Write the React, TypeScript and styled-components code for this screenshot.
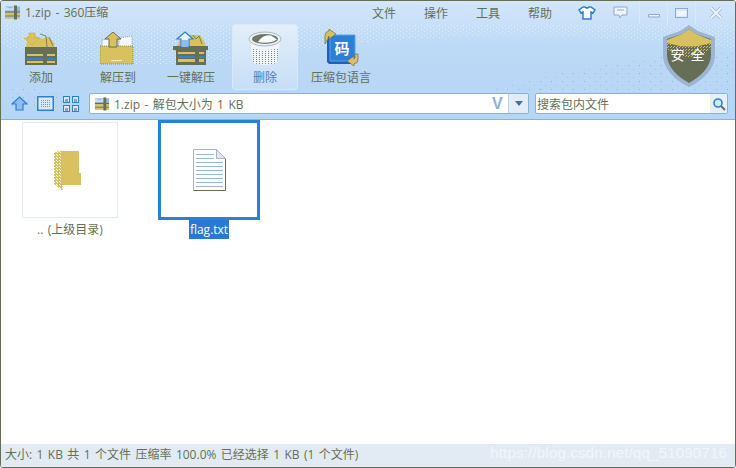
import styled, { createGlobalStyle } from "styled-components";

const OLIVE = "#666f55";
const GOLD = "#d9c15f";
const BLUE = "#2a7fd8";

const GlobalStyle = createGlobalStyle`
    html, body {
        margin: 0;
        padding: 0;
        background: #fff;
    }
    body {
        font-family: "Open Sans", "Noto Sans CJK SC", sans-serif;
        font-size: 12px;
        word-spacing: 1.3px;
        color: ${OLIVE};
    }
`;

const tools = [
    { label: "添加", width: 76, icon: <AddIcon /> },
    { label: "解压到", width: 78, icon: <ExtractToIcon /> },
    { label: "一键解压", width: 68, icon: <OneClickIcon /> },
    { label: "删除", width: 66, icon: <DeleteIcon />, hovered: true },
    { label: "压缩包语言", width: 86, icon: <LanguageIcon /> },
];

export default function App() {
    return (
        <Window>
            <GlobalStyle />
            <Header>
                <HeaderDots />
                <TitleBar>
                    <TitleText>
                        <ZipIcon size={17} />
                        1.zip - 360压缩
                    </TitleText>
                    <Menu>
                        <MenuItem>文件</MenuItem>
                        <MenuItem>操作</MenuItem>
                        <MenuItem>工具</MenuItem>
                        <MenuItem>帮助</MenuItem>
                    </Menu>
                    <WindowControls>
                        <SkinIcons>
                            <ShirtIcon />
                            <ChatIcon />
                        </SkinIcons>
                        <Control $width={28}><MinIcon /></Control>
                        <Control $width={28}><MaxIcon /></Control>
                        <Control $width={40}><CloseIcon /></Control>
                    </WindowControls>
                </TitleBar>
                <Toolbar>
                    {tools.map((tool) => (
                        <ToolButton key={tool.label} $width={tool.width} $hovered={tool.hovered}>
                            {tool.icon}
                            <ToolLabel $hovered={tool.hovered}>{tool.label}</ToolLabel>
                        </ToolButton>
                    ))}
                </Toolbar>
                <ShieldBadge>
                    <ShieldIcon />
                    <ShieldText>安全</ShieldText>
                </ShieldBadge>
                <NavBar>
                    <NavIcons>
                        <UpIcon />
                        <ThumbIcon />
                        <GridIcon />
                    </NavIcons>
                    <AddressBox>
                        <ZipIcon size={16} />
                        <AddressText>1.zip - 解包大小为 1 KB</AddressText>
                        <VMark>V</VMark>
                        <DropButton>
                            <Caret />
                        </DropButton>
                    </AddressBox>
                    <SearchBox>
                        <SearchText>搜索包内文件</SearchText>
                        <SearchButton>
                            <SearchIcon />
                        </SearchButton>
                    </SearchBox>
                </NavBar>
            </Header>
            <Content>
                <FileItem>
                    <TileSlot>
                        <Tile>
                            <FolderIcon />
                        </Tile>
                    </TileSlot>
                    <FileName>.. (上级目录)</FileName>
                </FileItem>
                <FileItem>
                    <TileSlot>
                        <Tile $selected>
                            <DocIcon />
                        </Tile>
                    </TileSlot>
                    <FileName $selected>flag.txt</FileName>
                </FileItem>
            </Content>
            <StatusBar>
                大小: 1 KB 共 1 个文件 压缩率 100.0% 已经选择 1 KB (1 个文件)
                <Watermark>https://blog.csdn.net/qq_51090716</Watermark>
            </StatusBar>
        </Window>
    );
}

// dotted wave in the header background
function HeaderDots() {
    return (
        <DotsLayer width="734" height="118" viewBox="0 0 734 118">
            <defs>
                <pattern id="headerDots" width="6" height="4" patternUnits="userSpaceOnUse">
                    <rect width="1" height="1" fill="#e2eefb" />
                    <rect x="3" y="2" width="1" height="1" fill="#e2eefb" />
                </pattern>
                <pattern id="waveDots" width="11" height="8" patternUnits="userSpaceOnUse">
                    <rect width="1" height="1" fill="#8fb2da" />
                    <rect x="5" y="4" width="1" height="1" fill="#a3c2e4" />
                </pattern>
            </defs>
            <path d="M0 24h734v24Q500 20 300 50T0 44z" fill="url(#headerDots)" />
            <path d="M490 90Q600 56 734 50v40H530z" fill="url(#waveDots)" />
            <path d="M6 88Q50 84 88 100l-60 8H6z" fill="url(#waveDots)" />
        </DotsLayer>
    );
}

function ZipIcon({ size }: { size: number }) {
    return (
        <svg width={size} height={size} viewBox="0 0 17 16">
            <path d="M1 2h15v12H1z" fill="#8fb8e6" />
            <path d="M1 2l5 2 5-2v4H1z" fill="#c8def5" />
            <path d="M1 8h15v6H1z" fill={GOLD} />
            <path d="M1 11h15v1H1z" fill="#3a7fd0" />
            <path d="M10 1h3v14h-3z" fill={OLIVE} />
            <path d="M1 7h15v1H1z" fill={OLIVE} />
        </svg>
    );
}

function AddIcon() {
    return (
        <svg width="36" height="36" viewBox="0 0 36 36">
            <path d="M4 5h9l6 3 5-2 3 1 4 5 1 7H2l2-8z" fill={GOLD} />
            <path d="M6 2h6v5h5l-8 7-8-7h5z" fill={GOLD} stroke="#c9ad49" strokeWidth=".6" />
            <path d="M17 3l6 2 1 11M26 6l4 9" stroke={OLIVE} strokeWidth=".8" fill="none" />
            <path d="M2 16h32v18H2z" fill={OLIVE} />
            <path d="M4 23h28v2H4z" fill={GOLD} />
            <path d="M4 27h28v2H4z" fill="#3a7fd0" />
            <path d="M4 30h28v2H4z" fill={GOLD} />
            <path d="M20 16h4v18h-4z" fill={OLIVE} />
        </svg>
    );
}

function ExtractToIcon() {
    return (
        <svg width="36" height="36" viewBox="0 0 36 36">
            <path d="M2 9l8-2v9H2z" fill="#f4f7fb" stroke={OLIVE} strokeDasharray="1 1" strokeWidth=".6" />
            <path d="M19 7l13-2v11H19z" fill="#f4f7fb" stroke={OLIVE} strokeDasharray="1 1" strokeWidth=".6" />
            <path d="M0 15h33v18H0z" fill={GOLD} stroke={OLIVE} strokeDasharray="1 1" strokeWidth=".7" />
            <path d="M11 29h11v1H11z" fill="#f6ecc0" />
            <path d="M13 1l8 7h-4v8H9V8H5z" fill={GOLD} stroke={OLIVE} strokeWidth="1" />
        </svg>
    );
}

function OneClickIcon() {
    return (
        <svg width="36" height="36" viewBox="0 0 36 36">
            <path d="M8 6l7-2 12 0 5 8 2 8H2z" fill={GOLD} />
            <path d="M20 4l3 4 3-3 3 8" stroke={OLIVE} strokeWidth=".8" fill="none" />
            <path d="M0 15h35v4H0z" fill={OLIVE} />
            <path d="M3 19h30v15H3z" fill={OLIVE} />
            <path d="M5 21h26v2H5z" fill={GOLD} />
            <path d="M5 25h26v2H5z" fill="#3a7fd0" />
            <path d="M5 28h26v3H5z" fill={GOLD} />
            <path d="M22 15h4v19h-4z" fill={OLIVE} />
            <path d="M12 1l8 7h-4v8H8V8H4z" fill="#eaf3fc" stroke={BLUE} strokeWidth="1.2" />
            <path d="M9 9h6v6H9z" fill="#8ebcec" />
        </svg>
    );
}

function DeleteIcon() {
    return (
        <svg width="36" height="38" viewBox="0 0 36 38">
            <defs>
                <pattern id="mesh" width="3" height="2" patternUnits="userSpaceOnUse">
                    <rect width="3" height="2" fill="#f0f5fa" />
                    <rect width="1" height="1" fill="#7c8778" />
                </pattern>
            </defs>
            <path d="M3 12l3 22q12 4 24 0l3-22z" fill="url(#mesh)" />
            <path d="M3 12l1 7q14 4 28 0l1-7z" fill="#f1f5f9" />
            <ellipse cx="18" cy="10" rx="16" ry="7" fill="#eef3f8" stroke="#a9b6c0" />
            <ellipse cx="18" cy="10" rx="13" ry="5" fill="#6f7a68" />
            <path d="M11 13q5-8 13-6.500l6 4q-8 5-19 2.500z" fill="#f7fafd" />
        </svg>
    );
}

function LanguageIcon() {
    return (
        <svg width="36" height="38" viewBox="0 0 36 38">
            <path d="M4 7h28v28H6l-2-2z" fill="#1f62b4" />
            <path d="M7 6h25v26H7z" fill="#2a7fd8" stroke="#5da3e8" />
            <path d="M2 15V6q0-3 4-4V0l7 5-7 5V7q-1 1-1 3z" fill={GOLD} stroke={OLIVE} strokeWidth=".7" />
            <path d="M35 25v6q0 3-4 4v2l-7-5 7-5v3q1-1 1-3l0-2z" fill={GOLD} stroke={OLIVE} strokeWidth=".7" />
            <text x="19" y="25" fontSize="15" fontWeight="700" fill="#fff" textAnchor="middle" fontFamily="Noto Sans CJK SC, sans-serif">码</text>
        </svg>
    );
}

function ShieldIcon() {
    return (
        <svg width="54" height="62" viewBox="0 0 54 62">
            <defs>
                <pattern id="shieldDither" width="3" height="3" patternUnits="userSpaceOnUse">
                    <rect width="1" height="1" fill={GOLD} />
                    <rect x="2" y="1" width="1" height="1" fill={GOLD} />
                </pattern>
            </defs>
            <path d="M27 0l9 6 17 6v18c0 14-13 26-26 32C14 56 1 44 1 30V12l17-6z" fill="#9db5d2" />
            <path d="M27 4l7 5 15 5v16c0 12-11 22-22 28C16 52 5 42 5 30V14l15-5z" fill={OLIVE} />
            <path d="M27 4l7 5 15 6v3q-22 7-44 0v-3l15-6z" fill={GOLD} />
            <path d="M5 18q22 7 44 0v6q-22 16-44 0z" fill="url(#shieldDither)" />
        </svg>
    );
}

function ShirtIcon() {
    return (
        <svg width="18" height="14" viewBox="0 0 18 14">
            <path d="M5 1h2q2 2 4 0h2l4 3-2 3-2-1v7H5V6L3 7 1 4z" fill="#fff" stroke={BLUE} strokeWidth="1.5" />
            <path d="M7 1q2 3 4 0" fill={BLUE} />
        </svg>
    );
}

function ChatIcon() {
    return (
        <svg width="15" height="13" viewBox="0 0 15 13">
            <path d="M1 1h13v8H9l-2 3-1-3H1z" fill="#eef4fb" stroke="#8fa9c8" />
            <path d="M4 4h7" stroke="#8fa9c8" />
        </svg>
    );
}

function MinIcon() {
    return (
        <svg width="12" height="12" viewBox="0 0 12 12">
            <path d="M.5 7.500h11v2.500H.5z" fill="#e8f0f9" stroke="#8fa9c8" />
        </svg>
    );
}

function MaxIcon() {
    return (
        <svg width="13" height="10" viewBox="0 0 13 10">
            <rect x=".5" y=".5" width="12" height="9" fill="#dbe8f6" stroke="#8fa9c8" />
            <rect x="2" y="3" width="9" height="5" fill="#eef4fb" />
        </svg>
    );
}

function CloseIcon() {
    return (
        <svg width="12" height="12" viewBox="0 0 12 12">
            <path d="M1 1l10 10M11 1L1 11" stroke="#9db5d2" strokeWidth="3.500" />
            <path d="M1 1l10 10M11 1L1 11" stroke="#eef4fb" strokeWidth="2" />
        </svg>
    );
}

function UpIcon() {
    return (
        <svg width="17" height="15" viewBox="0 0 17 15">
            <path d="M8.500 1L16 8h-4v6H5V8H1z" fill="#8ebcec" stroke={BLUE} strokeWidth="1.2" />
        </svg>
    );
}

function ThumbIcon() {
    return (
        <svg width="17" height="15" viewBox="0 0 17 15">
            <defs>
                <pattern id="thumbDither" width="2" height="2" patternUnits="userSpaceOnUse">
                    <rect width="2" height="2" fill="#dbe8f6" />
                    <rect width="1" height="1" fill="#7f93a8" />
                </pattern>
            </defs>
            <rect x=".75" y=".75" width="15.500" height="13.500" fill="#dbe8f6" stroke={BLUE} strokeWidth="1.5" />
            <rect x="3" y="3" width="11" height="9" fill="url(#thumbDither)" />
        </svg>
    );
}

function GridIcon() {
    return (
        <svg width="16" height="16" viewBox="0 0 16 16">
            {[0, 9].map((y) =>
                [0, 9].map((x) => (
                    <g key={`${x}-${y}`}>
                        <rect x={x + 0.5} y={y + 0.5} width="6" height="6" fill="#dbe8f6" stroke={BLUE} />
                        <rect x={x + 2} y={y + 3} width="3" height="3" fill="#8fa5bd" />
                    </g>
                ))
            )}
        </svg>
    );
}

function SearchIcon() {
    return (
        <svg width="14" height="14" viewBox="0 0 14 14">
            <circle cx="6" cy="6" r="4" fill="#d5e6f7" stroke={BLUE} strokeWidth="1.6" />
            <path d="M9 9l4 4" stroke={OLIVE} strokeWidth="2" />
        </svg>
    );
}

function FolderIcon() {
    return (
        <svg width="32" height="42" viewBox="0 0 32 42">
            <defs>
                <pattern id="dither" width="3" height="3" patternUnits="userSpaceOnUse">
                    <rect width="3" height="3" fill={GOLD} />
                    <rect width="1" height="1" fill="#fff" />
                    <rect x="2" y="2" width="1" height="1" fill="#fff" />
                </pattern>
            </defs>
            <path d="M6 2h19v22h2v12H6z" fill={GOLD} />
            <path d="M0 3l8-1v34l1 6-9-7z" fill="url(#dither)" />
        </svg>
    );
}

function DocIcon() {
    return (
        <svg width="33" height="42" viewBox="0 0 33 42">
            <path d="M.5.5h23l9 9v32H.5z" fill="#fff" stroke="#a5b5c5" />
            <path d="M32.500 10v31.500H.5" fill="none" stroke={OLIVE} />
            <path d="M23.500.5v9h9z" fill="#dfe8f1" stroke="#a5b5c5" />
            {[5, 9, 13, 17, 21, 25, 29, 33, 37].map((y) => (
                <path key={y} d={`M3 ${y + 0.5}h${y < 10 ? 18 : 27}`} stroke="#9db8d6" />
            ))}
        </svg>
    );
}

const Window = styled.div`
    width: 736px;
    height: 468px;
    box-sizing: border-box;
    display: flex;
    flex-direction: column;
    border: 1px solid ${OLIVE};
    border-radius: 3px;
    overflow: hidden;
    background: #fff;
`;

const Header = styled.header`
    position: relative;
    flex: 0 0 118px;
    display: flex;
    flex-direction: column;
    background: linear-gradient(#d3e6fa 0, #bcd9f6 40%, #b5d6f6 100%);
    border-bottom: 1px solid #8db0d6;
`;

const DotsLayer = styled.svg`
    position: absolute;
    left: 0;
    top: 0;
`;

const TitleBar = styled.div`
    position: relative;
    flex: 0 0 23px;
    display: flex;
    align-items: center;
    padding-left: 3px;
`;

const TitleText = styled.div`
    display: flex;
    align-items: center;
    gap: 4px;
    width: 368px;
    line-height: 17px;
`;

const Menu = styled.nav`
    display: flex;
    gap: 27px;
`;

const MenuItem = styled.span`
    width: 25px;
    white-space: nowrap;
`;

const WindowControls = styled.div`
    margin-left: auto;
    display: flex;
    align-items: flex-start;
    height: 23px;
`;

const SkinIcons = styled.div`
    display: flex;
    align-items: center;
    gap: 17px;
    height: 23px;
    margin-right: 11px;
`;

const Control = styled.div<{ $width: number }>`
    width: ${({ $width }) => $width}px;
    height: 23px;
    display: flex;
    align-items: center;
    justify-content: center;
    border-left: 1px solid #dce9f7;
    box-sizing: border-box;
`;

const Toolbar = styled.div`
    position: relative;
    flex: 0 0 69px;
    display: flex;
    align-items: flex-start;
    padding-left: 2px;
`;

const ToolButton = styled.div<{ $width: number; $hovered?: boolean }>`
    width: ${({ $width }) => $width}px;
    margin-left: ${({ $hovered }) => ($hovered ? "7px" : "0")};
    height: 66px;
    box-sizing: border-box;
    display: flex;
    flex-direction: column;
    align-items: center;
    justify-content: flex-end;
    padding-bottom: 2px;
    border-radius: 3px;
    border: 1px solid ${({ $hovered }) => ($hovered ? "#dbe8f6" : "transparent")};
    background: ${({ $hovered }) => ($hovered ? "linear-gradient(#e3eef9, #c6def7)" : "transparent")};
`;

const ToolLabel = styled.span<{ $hovered?: boolean }>`
    margin-top: 2px;
    line-height: 18px;
    white-space: nowrap;
    color: ${({ $hovered }) => ($hovered ? "#4f7fb8" : OLIVE)};
`;

const ShieldBadge = styled.div`
    position: absolute;
    left: 661px;
    top: 24px;
    width: 54px;
    height: 62px;
`;

const ShieldText = styled.span`
    position: absolute;
    left: 3px;
    right: 0;
    top: 21px;
    text-align: center;
    color: #fff;
    font-size: 14px;
    letter-spacing: 6px;
    line-height: 18px;
`;

const NavBar = styled.div`
    position: relative;
    flex: 0 0 21px;
    display: flex;
    align-items: stretch;
    padding: 0 7px 0 10px;
`;

const NavIcons = styled.div`
    width: 78px;
    display: flex;
    align-items: center;
    gap: 9px;
`;

const AddressBox = styled.div`
    width: 440px;
    box-sizing: border-box;
    display: flex;
    align-items: center;
    padding-left: 4px;
    background: #fff;
    border: 1px solid #8db0d6;
    border-radius: 2px;
`;

const AddressText = styled.span`
    margin-left: 4px;
    flex: 1;
`;

const VMark = styled.span`
    width: 16px;
    color: #8fb0d8;
    font: 700 16px "Liberation Sans", sans-serif;
`;

const DropButton = styled.div`
    width: 19px;
    align-self: stretch;
    display: flex;
    align-items: center;
    justify-content: center;
    background: #e2ecf7;
    border-left: 1px solid #bcd0e6;
`;

const Caret = styled.div`
    border: 4px solid transparent;
    border-top: 5px solid #3d6fa8;
    border-bottom: 0;
`;

const SearchBox = styled.div`
    width: 193px;
    box-sizing: border-box;
    margin-left: 6px;
    display: flex;
    align-items: center;
    padding-left: 1px;
    background: #fff;
    border: 1px solid #8db0d6;
    border-radius: 2px;
`;

const SearchText = styled.span`
    flex: 1;
`;

const SearchButton = styled.div`
    width: 17px;
    align-self: stretch;
    display: flex;
    align-items: center;
    justify-content: center;
    background: #e6eff8;
`;

const Content = styled.main`
    flex: 1;
    display: flex;
    align-items: flex-start;
    gap: 40px;
    padding-left: 21px;
    background: #fff;
`;

const FileItem = styled.div`
    display: flex;
    flex-direction: column;
    align-items: center;
`;

const TileSlot = styled.div`
    height: 100px;
    display: flex;
    align-items: center;
`;

const Tile = styled.div<{ $selected?: boolean }>`
    width: ${({ $selected }) => ($selected ? "102px" : "96px")};
    height: ${({ $selected }) => ($selected ? "100px" : "96px")};
    box-sizing: border-box;
    display: flex;
    align-items: center;
    justify-content: center;
    border: ${({ $selected }) => ($selected ? `3px solid ${BLUE}` : "1px solid #e4ecf4")};
`;

const FileName = styled.span<{ $selected?: boolean }>`
    padding: 0 1px;
    line-height: 19px;
    color: ${({ $selected }) => ($selected ? "#fff" : OLIVE)};
    background: ${({ $selected }) => ($selected ? "#2a78d0" : "transparent")};
`;

const StatusBar = styled.footer`
    position: relative;
    flex: 0 0 23px;
    box-sizing: border-box;
    display: flex;
    align-items: center;
    padding: 0 0 4px 4px;
    background: #e2ebf4;
    white-space: nowrap;
`;

const Watermark = styled.span`
    position: absolute;
    right: 8px;
    top: 0;
    color: #f2f6fb;
    font: 15px "Liberation Sans", sans-serif;
    letter-spacing: 0.2px;
    line-height: 18px;
`;
